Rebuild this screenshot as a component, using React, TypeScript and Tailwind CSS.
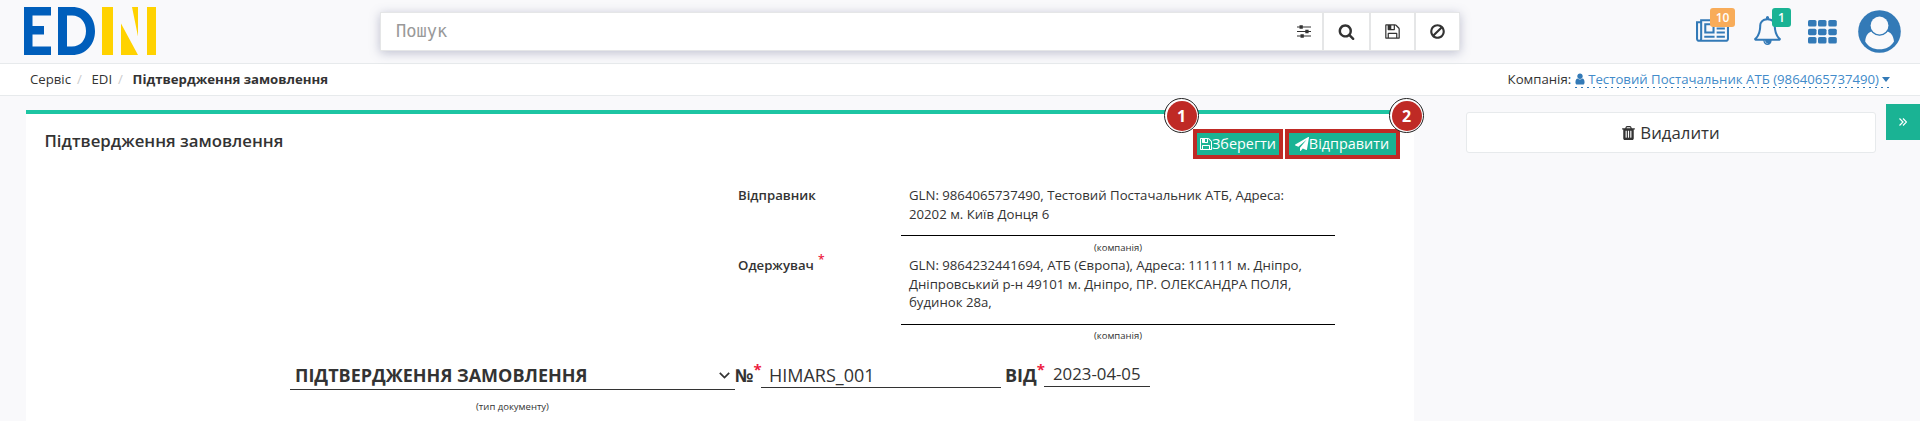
import React from "react";

type IconProps = { d: string; className?: string; viewBox?: string };

const Icon = ({ d, className = "", viewBox = "0 0 1792 1792" }: IconProps) => (
  <svg viewBox={viewBox} fill="currentColor" className={`shrink-0 ${className}`} aria-hidden="true">
    <path d={d} />
  </svg>
);

const SAVE =
  "M512 1536h768v-384h-768v384zm896 0h128v-896q0-14-10-38.5t-20-34.5l-281-281q-10-10-34-20t-39-10v416q0 40-28 68t-68 28h-576q-40 0-68-28t-28-68v-416h-128v1280h128v-416q0-40 28-68t68-28h832q40 0 68 28t28 68v416zm-384-928v-320q0-13-9.5-22.5t-22.5-9.5h-192q-13 0-22.5 9.5t-9.5 22.5v320q0 13 9.5 22.5t22.5 9.5h192q13 0 22.5-9.5t9.5-22.5zm640 32v928q0 40-28 68t-68 28h-1344q-40 0-68-28t-28-68v-1344q0-40 28-68t68-28h928q40 0 88 20t76 48l280 280q28 28 48 76t20 88z";
const SEARCH =
  "M1216 832q0-185-131.5-316.5t-316.5-131.5-316.5 131.5-131.5 316.5 131.5 316.5 316.5 131.5 316.5-131.5 131.5-316.5zm512 832q0 52-38 90t-90 38q-54 0-90-38l-343-342q-179 124-399 124-143 0-273.5-55.5t-225-150-150-225-55.5-273.5 55.5-273.5 150-225 225-150 273.5-55.5 273.5 55.5 225 150 150 225 55.5 273.5q0 220-124 399l343 343q37 37 37 90z";
const BAN =
  "M1440 893q0-161-87-295l-754 753q137 89 297 89 111 0 211.5-43.5t173.5-116.5 116-174.5 43-212.5zm-999 299l755-754q-135-91-300-91-148 0-273 73t-198 199-73 274q0 162 89 299zm1223-299q0 157-61 300t-163.5 246-245 164-298.5 61-298.5-61-245-164-163.5-246-61-300 61-299.5 163.5-245.5 245-164 298.5-61 298.5 61 245 164 163.5 245.5 61 299.5z";
const PLANE =
  "M1764 11q33 24 27 64l-256 1536q-5 29-32 45-14 8-31 8-11 0-24-5l-453-185-242 295q-18 23-49 23-13 0-22-4-19-7-30.5-23.5t-11.5-36.5v-349l864-1059-1069 925-395-162q-37-14-40-55-2-40 32-59l1664-960q15-9 32-9 20 0 36 11z";
const TRASH =
  "M704 1376v-704q0-14-9-23t-23-9h-64q-14 0-23 9t-9 23v704q0 14 9 23t23 9h64q14 0 23-9t9-23zm256 0v-704q0-14-9-23t-23-9h-64q-14 0-23 9t-9 23v704q0 14 9 23t23 9h64q14 0 23-9t9-23zm256 0v-704q0-14-9-23t-23-9h-64q-14 0-23 9t-9 23v704q0 14 9 23t23 9h64q14 0 23-9t9-23zm-544-992h448l-48-117q-7-9-17-11h-317q-10 2-17 11zm928 32v64q0 14-9 23t-23 9h-96v948q0 83-47 143.5t-113 60.5h-832q-66 0-113-58.5t-47-141.5v-952h-96q-14 0-23-9t-9-23v-64q0-14 9-23t23-9h309l70-167q15-37 54-63t79-26h320q40 0 79 26t54 63l70 167h309q14 0 23 9t9 23z";
const BELL =
  "M912 1696q0-16-16-16-59 0-101.5-42.5t-42.5-101.5q0-16-16-16t-16 16q0 73 51.5 124.5t124.5 51.5q16 0 16-16zm-666-288h1300q-266-300-266-832 0-51-24-105t-69-103-121.5-80.5-169.5-31.5-169.5 31.5-121.5 80.5-69 103-24 105q0 532-266 832zm1482 0q0 52-38 90t-90 38h-448q0 106-75 181t-181 75-181-75-75-181h-448q-52 0-90-38t-38-90q50-42 91-88t85-119.5 74.5-158.5 50-206 19.5-260q0-152 117-282.5t307-158.5q-8-19-8-39 0-40 28-68t68-28 68 28 28 68q0 20-8 39 190 28 307 158.5t117 282.5q0 139 19.5 260t50 206 74.5 158.5 85 119.5 91 88z";
const NEWS =
  "M1024 512h-384v384h384v-384zm128 640v128h-640v-128h640zm0-768v640h-640v-640h640zm640 768v128h-512v-128h512zm0-256v128h-512v-128h512zm0-256v128h-512v-128h512zm0-256v128h-512v-128h512zm-1536 960v-960h-128v960q0 26 19 45t45 19 45-19 19-45zm1664 0v-1088h-1536v1088q0 33-11 64h1483q26 0 45-19t19-45zm128-1216v1216q0 80-56 136t-136 56h-1664q-80 0-136-56t-56-136v-1088h256v-128h1792z";
const USER =
  "M1536 1399q0 109-62.5 187t-150.5 78h-854q-88 0-150.5-78t-62.5-187q0-85 8.5-160.5t31.5-152 58.5-131 94-89 134.5-34.5q131 128 313 128t313-128q76 0 134.5 34.5t94 89 58.5 131 31.5 152 8.5 160.5zm-256-887q0 159-112.5 271.5t-271.5 112.5-271.5-112.5-112.5-271.5 112.5-271.5 271.5-112.5 271.5 112.5 112.5 271.5z";

const Logo = () => (
  <svg viewBox="0 0 132 48" className="h-12 w-[132px]" aria-label="EDIN">
    <g fill="#005ebb">
      <path d="M0 0H27V8.500H8.500V19H20V27.500H8.500V39.500H27V48H0Z" />
      <path fillRule="evenodd" d="M34 0H48C62 0 71 10.500 71 24S62 48 48 48H34ZM43 8.500V39.500H48C56.500 39.500 62 33 62 24S56.500 8.500 48 8.500Z" />
    </g>
    <path fill="#ffd200" d="M78 0H89V48H78ZM97 16.500L114 48H97ZM108 0H114V29.500ZM123 0H132V48H123Z" />
  </svg>
);

const Sliders = () => (
  <svg viewBox="0 0 14 13" className="h-[13px] w-[14px]" fill="currentColor" aria-hidden="true">
    <path d="M0 1.500H14V2.500H0ZM0 6H14V7H0ZM0 10.500H14V11.500H0Z" />
    <path d="M2.500 .3H5.800V3.700H2.500ZM8.300 4.800H11.600V8.200H8.300ZM3.500 9.300H6.800V12.700H3.500Z" />
  </svg>
);

const Grid = () => (
  <svg viewBox="0 0 29 24" className="h-6 w-[29px]" fill="currentColor" aria-hidden="true">
    {[0, 10, 20.3].map((x) =>
      [0, 8.7, 17].map((y) => <rect key={`${x}-${y}`} x={x} y={y} width="8.500" height="6.500" rx="1.600" />)
    )}
  </svg>
);

const Avatar = () => (
  <svg viewBox="0 0 43 43" className="size-[43px]" aria-hidden="true">
    <circle cx="21.500" cy="21.500" r="21.300" fill="#337ab7" />
    <path d="M7.200 31.500C7.700 25.500 10.200 22 14.200 21.500C18 26.500 25 26.500 28.800 21.500C32.800 22 35.300 25.500 36 31.500C33 36.500 28 39.300 21.500 39.300S10 36.500 7.200 31.500Z" fill="#f9f9fb" />
    <circle cx="21.500" cy="15.500" r="10.200" fill="#337ab7" />
    <circle cx="21.500" cy="15.500" r="8.900" fill="#f9f9fb" />
  </svg>
);

const Marker = ({ n, className }: { n: number; className: string }) => (
  <span
    className={`absolute flex size-[35px] items-center justify-center rounded-full border border-[#222] bg-white p-[1.5px] ${className}`}
  >
    <span className="flex size-full items-center justify-center rounded-full bg-[#bf2a25] text-[16px] leading-none font-bold text-white">
      {n}
    </span>
  </span>
);

const Header = () => (
  <header className="flex h-16 border-b border-[#e7eaec] pl-6">
    <div className="w-[356px] pt-[7px]">
      <Logo />
    </div>
    <div className="mt-3 flex h-[39px] w-[1080px] border border-[#e5e6e7] bg-white shadow-[0_2px_10px_rgba(80,85,130,0.35)]">
      <div className="flex flex-1 items-center justify-between pr-[11px] pl-[15px]">
        <span className="font-['DejaVu_Sans_Mono',monospace] text-[17px] text-[#999]">Пошук</span>
        <Sliders />
      </div>
      <div className="flex w-[47px] items-center justify-center border-l-2 border-[#e5e6e7]">
        <Icon d={SEARCH} className="size-[17px]" />
      </div>
      <div className="flex w-[45px] items-center justify-center border-l-2 border-[#e5e6e7]">
        <Icon d={SAVE} className="size-[17px]" />
      </div>
      <div className="flex w-[45px] items-center justify-center border-l-2 border-[#e5e6e7]">
        <Icon d={BAN} className="size-[17px]" />
      </div>
    </div>
    <div className="flex flex-1 text-[#337ab7]">
      <div className="relative ml-[236px] pt-[17px]">
        <Icon d={NEWS} viewBox="0 0 2048 1792" className="h-[29px] w-[33px]" />
        <span className="absolute top-2 left-[14px] flex h-[19px] w-[25px] items-center justify-center rounded-[3px] bg-[#f8ac59] text-[12px] font-semibold text-white">
          10
        </span>
      </div>
      <div className="relative ml-[24px] pt-4">
        <Icon d={BELL} className="size-[29px]" />
        <span className="absolute top-2 left-[19px] flex h-[19px] w-[19px] items-center justify-center rounded-[3px] bg-[#1ab394] text-[12px] font-semibold text-white">
          1
        </span>
      </div>
      <div className="ml-[26px] pt-5">
        <Grid />
      </div>
      <div className="ml-[21px] pt-[10px]">
        <Avatar />
      </div>
    </div>
  </header>
);

const Breadcrumbs = () => (
  <nav className="flex h-8 items-center justify-between border-b border-[#e7eaec] bg-white pr-[30px] pl-[30px] text-[13.200px]">
    <div className="flex">
      <span>Сервіс</span>
      <span className="w-[20.500px] pl-[6px] text-[#ccc]">/</span>
      <span>EDI</span>
      <span className="w-[20.500px] pl-[6px] text-[#ccc]">/</span>
      <strong className="font-bold">Підтвердження замовлення</strong>
    </div>
    <div className="flex items-center">
      <span className="mr-1">Компанія:</span>
      <span className="flex h-[18px] items-center bg-[repeating-linear-gradient(90deg,#337ab7_0_2px,transparent_2px_6px)] bg-[length:100%_1px] bg-bottom bg-no-repeat text-[#428bca]">
        <Icon d={USER} viewBox="192 128 1408 1536" className="mr-[3px] h-[12px] w-[10px] text-[#337ab7]" />
        Тестовий Постачальник АТБ (9864065737490)
        <svg viewBox="0 0 8 5" className="ml-[3px] h-[5px] w-[8px]" fill="#337ab7">
          <path d="M0 0H8L4 5Z" />
        </svg>
      </span>
    </div>
  </nav>
);

type PartyProps = { label: string; required?: boolean; lines: string[]; className: string; captionClass: string };

const Party = ({ label, required, lines, className, captionClass }: PartyProps) => (
  <div className="ml-[712px] flex">
    <div className="w-[163px] pt-px text-[13.200px] leading-[18.57px] font-semibold">
      {label}
      {required && <sup className="ml-1 text-[12px] leading-none text-[#ed1c40]">*</sup>}
    </div>
    <div className="w-[434px]">
      <div className={`border-b border-black pt-px pl-2 text-[13.200px] leading-[18.57px] ${className}`}>
        {lines.map((line) => (
          <div key={line} className="whitespace-nowrap">{line}</div>
        ))}
      </div>
      <div className={`h-[19px] text-center text-[9.500px] leading-[13px] ${captionClass}`}>(компанія)</div>
    </div>
  </div>
);

const Star = () => <span className="-mt-[6px] text-[15px] text-[#ed1c40]">*</span>;

const Panel = () => (
  <main className="relative h-[311px] w-[1388px] border-t-4 border-[#1dc5a3] bg-white">
    <div className="flex h-[71px] justify-between pr-[14px] pl-[18.500px]">
      <h1 className="pt-[15px] text-[16.800px] leading-6 font-semibold">Підтвердження замовлення</h1>
      <div className="flex gap-[2px] pt-[15px] text-[14.400px] text-white">
        <button className="flex h-[30px] w-[90px] items-center justify-center border-4 border-[#bf2a25] bg-[#1ab394] pb-px">
          <Icon d={SAVE} viewBox="128 128 1536 1536" className="size-[12px]" />
          Зберегти
        </button>
        <button className="flex h-[30px] w-[115px] items-center justify-center border-4 border-[#bf2a25] bg-[#1ab394] pr-px pb-px">
          <Icon d={PLANE} className="size-[14px]" />
          Відправити
        </button>
      </div>
    </div>
    <Party
      label="Відправник"
      lines={["GLN: 9864065737490, Тестовий Постачальник АТБ, Адреса:", "20202 м. Київ Донця 6"]}
      className="h-[51px]"
      captionClass="pt-[5px]"
    />
    <Party
      label="Одержувач"
      required
      lines={[
        "GLN: 9864232441694, АТБ (Європа), Адреса: 111111 м. Дніпро,",
        "Дніпровський р-н 49101 м. Дніпро, ПР. ОЛЕКСАНДРА ПОЛЯ,",
        "будинок 28а,",
      ]}
      className="h-[70px]"
      captionClass="pt-1"
    />
    <div className="mt-[17px] ml-[264px] flex items-start text-[18px] leading-7">
      <div className="w-[445px]">
        <div className="flex h-[29px] items-center justify-between border-b border-[#333] pr-[5px] pl-[5px] font-bold">
          ПІДТВЕРДЖЕННЯ ЗАМОВЛЕННЯ
          <svg viewBox="0 0 11 7" className="h-[7px] w-[11px]" fill="none" stroke="currentColor" strokeWidth="1.700">
            <path d="M.8 .8L5.500 5.600L10.200 .8" />
          </svg>
        </div>
        <div className="pt-[10px] text-center text-[9.500px] leading-[13px]">(тип документу)</div>
      </div>
      <span className="flex w-[26px] font-bold">№<Star /></span>
      <span className="h-[27px] w-[240px] border-b border-[#333] pl-2">HIMARS_001</span>
      <span className="ml-[4px] flex w-[39px] font-bold">ВІД<Star /></span>
      <span className="h-[26px] w-[106px] border-b border-[#333] pl-[9px] text-[16.800px] leading-[25px]">2023-04-05</span>
    </div>
    <Marker n={1} className="-top-[16px] left-[1138px]" />
    <Marker n={2} className="-top-[16px] left-[1363px]" />
  </main>
);

export default function App() {
  return (
    <div className="h-[421px] w-[1920px] overflow-hidden bg-[#f9f9fb] font-['Open_Sans',sans-serif] text-[#333]">
      <Header />
      <Breadcrumbs />
      <div className="flex items-start pl-[26px]">
        <div className="pt-[14px]">
          <Panel />
        </div>
        <button className="mt-4 ml-[52px] flex h-[41px] w-[410px] items-center justify-center rounded-[3px] border border-[#e7eaec] bg-white text-[16.800px]">
          <Icon d={TRASH} viewBox="192 128 1408 1536" className="mr-[5px] h-[14px] w-[13px]" />
          Видалити
        </button>
        <button className="mt-2 ml-[10px] flex h-9 w-[34px] items-center justify-center bg-[#1ab394] text-white">
          <svg viewBox="0 0 8 8" className="size-[8px]" fill="none" stroke="currentColor" strokeWidth="1.200">
            <path d="M.5 .5L4 4L.5 7.500M4 .5L7.500 4L4 7.500" />
          </svg>
        </button>
      </div>
    </div>
  );
}
